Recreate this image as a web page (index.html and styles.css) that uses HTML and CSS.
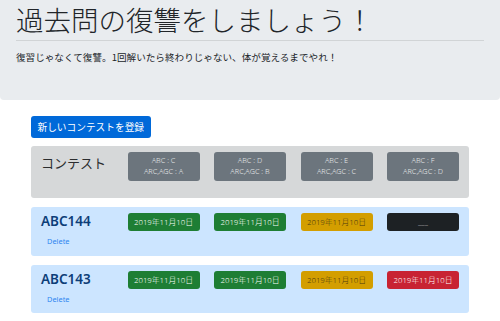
FILE: index.html
```html
<!DOCTYPE html>
<html lang="ja">
<head>
    <meta charset="UTF-8">
    <meta name="viewport" content="width=device-width, initial-scale=1.0">
    <title>過去問の復讐</title>
    <link rel="stylesheet" href="styles.css">
</head>
<body>

    <div class="jumbotron">
        <h1 class="title">過去問の復讐をしましょう！</h1>
        <hr class="divider">
        <p class="lead">復習じゃなくて復讐。1回解いたら終わりじゃない、体が覚えるまでやれ！</p>
    </div>

    <div class="container">
        <button class="btn-new">新しいコンテストを登録</button>

        <div class="contest-row contest-head">
            <div class="head-label">コンテスト</div>
            <div class="head-badge">ABC : C<br>ARC,AGC : A</div>
            <div class="head-badge">ABC : D<br>ARC,AGC : B</div>
            <div class="head-badge">ABC : E<br>ARC,AGC : C</div>
            <div class="head-badge">ABC : F<br>ARC,AGC : D</div>
        </div>

        <div class="contest-row contest-item">
            <div class="name-col">
                <div class="contest-name">ABC144</div>
                <a class="delete" href="#">Delete</a>
            </div>
            <div class="date date-green">2019年11月10日</div>
            <div class="date date-green">2019年11月10日</div>
            <div class="date date-yellow">2019年11月10日</div>
            <div class="date date-dark">___</div>
        </div>

        <div class="contest-row contest-item">
            <div class="name-col">
                <div class="contest-name">ABC143</div>
                <a class="delete" href="#">Delete</a>
            </div>
            <div class="date date-green">2019年11月10日</div>
            <div class="date date-green">2019年11月10日</div>
            <div class="date date-yellow">2019年11月10日</div>
            <div class="date date-red">2019年11月10日</div>
        </div>
    </div>

</body>
</html>
```

FILE: styles.css
```css
/* базовое */
body {
    margin: 0;
    font-family: "Noto Sans", "Noto Sans CJK JP", sans-serif;
    color: #212529;
    background-color: #fff;
}

/* шапка */
.jumbotron {
    height: 100px;
    box-sizing: border-box;
    padding: 3px 16px 0;
    background-color: #e9ecef;
    border-radius: 0 0 4px 4px;
}
.title {
    margin: 0;
    font-size: 27.5px;
    font-weight: 300;
    line-height: 1.2;
    font-family: "Noto Sans CJK JP", sans-serif;
}
.divider {
    margin: 4px 0 0;
    border: 0;
    border-top: 1px solid rgba(0, 0, 0, 0.1);
}
.lead {
    margin: 9px 0 0;
    font-size: 9.6px;
    line-height: 1.5;
    font-family: "Noto Sans CJK JP", sans-serif;
}

/* список контестов */
.container {
    width: 438px;
    margin: 16px auto 0;
}
.btn-new {
    display: block;
    height: 22px;
    padding: 0 6.5px;
    border: none;
    border-radius: 3px;
    background-color: #0069d9;
    color: #fff;
    font-family: "Noto Sans CJK JP", sans-serif;
    font-size: 9.7px;
    cursor: pointer;
}
.contest-row {
    display: grid;
    grid-template-columns: repeat(5, 72px);
    column-gap: 14.5px;
    box-sizing: border-box;
    padding: 6px 10px;
    border-radius: 3px;
}
.contest-head {
    height: 52px;
    margin-top: 8px;
    background-color: #d6d8d9;
}
.head-label {
    font-family: "Noto Sans CJK JP", sans-serif;
    font-size: 13px;
    line-height: 22px;
    color: #2b2d2f;
}
.head-badge {
    height: 29px;
    padding-top: 3px;
    box-sizing: border-box;
    background-color: #6c757d;
    border-radius: 3px;
    color: #e4e6e8;
    font-size: 7.3px;
    font-weight: 300;
    line-height: 11px;
    text-align: center;
}
.contest-item {
    height: 49px;
    margin-top: 9px;
    background-color: #cce5ff;
}
.contest-item + .contest-item {
    height: 48px;
}
.contest-name {
    font-size: 13.5px;
    font-weight: 600;
    line-height: 17px;
    color: #0d3d78;
}
.delete {
    display: block;
    margin: 5px 0 0 6px;
    font-size: 7.4px;
    line-height: 12px;
    color: #2f86f0;
    text-decoration: none;
}
.date {
    height: 18px;
    border-radius: 3px;
    font-family: "Noto Sans", "Noto Sans CJK JP", sans-serif;
    font-size: 7.8px;
    font-weight: 300;
    line-height: 18px;
    text-align: center;
    color: #fff;
}
.date-green {
    background-color: #1e7e34;
}
.date-yellow {
    background-color: #d39e00;
    color: #4a3a10;
}
.date-dark {
    background-color: #1d2124;
    color: #c8c8c8;
}
.date-red {
    background-color: #c82333;
}
```
